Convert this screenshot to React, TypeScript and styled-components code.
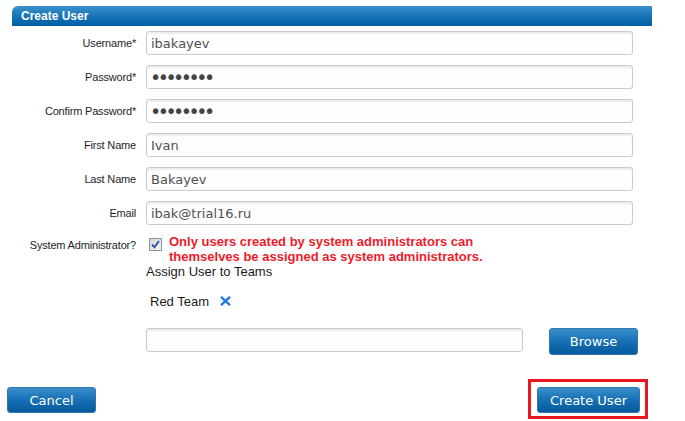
import React from "react";
import styled, { createGlobalStyle } from "styled-components";

const GlobalStyle = createGlobalStyle`
  html, body { margin: 0; padding: 0; background: #ffffff; }
  * { box-sizing: border-box; }
`;

const Page = styled.div`
  width: 685px;
  height: 421px;
  padding: 6px 0 0 7px;
  overflow: hidden;
  font-family: "Liberation Sans", Arial, sans-serif;
`;

const Header = styled.div`
  margin-left: 5px;
  width: 640px;
  height: 20px;
  padding-left: 9px;
  border-top-left-radius: 6px;
  background: linear-gradient(#3c91cc, #1472b5 55%, #005da3);
  color: #ffffff;
  font: bold 12px/20px "Liberation Sans", Arial, sans-serif;
`;

const Form = styled.div`
  margin-left: 5px;
  width: 640px;
  padding-top: 5px;
  display: flex;
  flex-direction: column;
  gap: 10px;
`;

const Row = styled.div`
  display: grid;
  grid-template-columns: 124px 487px;
  column-gap: 10px;
  align-items: center;
`;

const Label = styled.label<{ $top?: number }>`
  text-align: right;
  font: 11px/13px "Liberation Sans", Arial, sans-serif;
  letter-spacing: -0.18px;
  color: #1e1e1e;
  margin-top: ${(p) => p.$top ?? 0}px;
  white-space: nowrap;
`;

const Input = styled.input<{ $width?: number }>`
  width: ${(p) => p.$width ?? 487}px;
  height: 24px;
  margin: 0;
  padding: 0 4px;
  border: 1px solid #cbcbcb;
  border-radius: 3px;
  background: #fefefe;
  box-shadow: inset 0 2px 2px rgba(0, 0, 0, 0.07);
  font: 13px "DejaVu Sans", Verdana, sans-serif;
  color: #505050;
  outline: none;

  &[type="password"] {
    font-size: 19px;
    letter-spacing: -3.5px;
    padding-left: 3px;
    color: #444444;
  }
`;

const AdminRow = styled.div`
  display: grid;
  grid-template-columns: 124px 487px;
  column-gap: 10px;
  align-items: start;
  margin-top: -1px;
`;

const AdminField = styled.div`
  display: flex;
  align-items: flex-start;
  gap: 7px;
  padding-left: 3px;
`;

const CheckBox = styled.span`
  flex: none;
  width: 13px;
  height: 13px;
  margin-top: 4px;
  border: 1px solid #8594a6;
  background: linear-gradient(135deg, #d6d6d2, #f6f6f4);
  display: flex;
  align-items: center;
  justify-content: center;
`;

const Warning = styled.div`
  font: bold 13px/15px "Liberation Sans", Arial, sans-serif;
  color: #ec1c2c;
`;

const TeamsSection = styled.div`
  padding-left: 134px;
  margin-top: -10px;
  display: flex;
  flex-direction: column;
`;

const SectionTitle = styled.div`
  font: 13px/16px "Liberation Sans", Arial, sans-serif;
  color: #1a1a1a;
`;

const TeamTag = styled.div`
  margin-top: 14px;
  padding-left: 4px;
  display: flex;
  align-items: center;
  gap: 11px;
  font: 13px/16px "Liberation Sans", Arial, sans-serif;
  color: #1a1a1a;
`;

const RemoveIcon = styled.svg`
  display: block;
  margin-top: -3px;
`;

const BrowseRow = styled.div`
  margin-top: 18px;
  display: flex;
  align-items: flex-start;
  gap: 26px;
`;

const Button = styled.button<{ $w: number; $h: number }>`
  width: ${(p) => p.$w}px;
  height: ${(p) => p.$h}px;
  margin: 0;
  padding: 0;
  border: 1px solid #3476ad;
  border-radius: 3px;
  background: linear-gradient(#3a8fcc, #1670b3 50%, #045a9d);
  color: #ffffff;
  font: 13px "DejaVu Sans", Verdana, sans-serif;
  cursor: pointer;
`;

const Footer = styled.div`
  width: 641px;
  margin-top: 24px;
  display: flex;
  justify-content: space-between;
  align-items: flex-start;
`;

const CancelWrap = styled.div`
  margin-top: 8px;
`;

const Highlight = styled.div`
  border: 3px solid #e8161f;
  padding: 5px 5px 3px 6px;
`;

const fields: { label: string; type: string; value: string }[] = [
  { label: "Username*", type: "text", value: "ibakayev" },
  { label: "Password*", type: "password", value: "password" },
  { label: "Confirm Password*", type: "password", value: "password" },
  { label: "First Name", type: "text", value: "Ivan" },
  { label: "Last Name", type: "text", value: "Bakayev" },
  { label: "Email", type: "text", value: "ibak@trial16.ru" },
];

export default function App() {
  return (
    <>
      <GlobalStyle />
      <Page>
        <Header>Create User</Header>
        <Form>
          {fields.map((f) => (
            <Row key={f.label}>
              <Label>{f.label}</Label>
              <Input type={f.type} value={f.value} readOnly />
            </Row>
          ))}
          <AdminRow>
            <Label $top={5}>System Administrator?</Label>
            <AdminField>
              <CheckBox>
                <svg width="9" height="9" viewBox="0 0 9 9">
                  <path d="M1 4.5 L3.4 7.2 L8 1" fill="none" stroke="#2c4aa6" strokeWidth="1.8" />
                </svg>
              </CheckBox>
              <Warning>
                Only users created by system administrators can
                <br />
                themselves be assigned as system administrators.
              </Warning>
            </AdminField>
          </AdminRow>
          <TeamsSection>
            <SectionTitle>Assign User to Teams</SectionTitle>
            <TeamTag>
              Red Team
              <RemoveIcon width="11" height="10" viewBox="0 0 11 10">
                <path d="M1 0.8 L10 9.2 M10 0.8 L1 9.2" stroke="#1d79de" strokeWidth="2.3" strokeLinecap="butt" />
              </RemoveIcon>
            </TeamTag>
            <BrowseRow>
              <Input $width={377} type="text" value="" readOnly />
              <Button $w={89} $h={27}>Browse</Button>
            </BrowseRow>
          </TeamsSection>
        </Form>
        <Footer>
          <CancelWrap>
            <Button $w={89} $h={26}>Cancel</Button>
          </CancelWrap>
          <Highlight>
            <Button $w={103} $h={26}>Create User</Button>
          </Highlight>
        </Footer>
      </Page>
    </>
  );
}
